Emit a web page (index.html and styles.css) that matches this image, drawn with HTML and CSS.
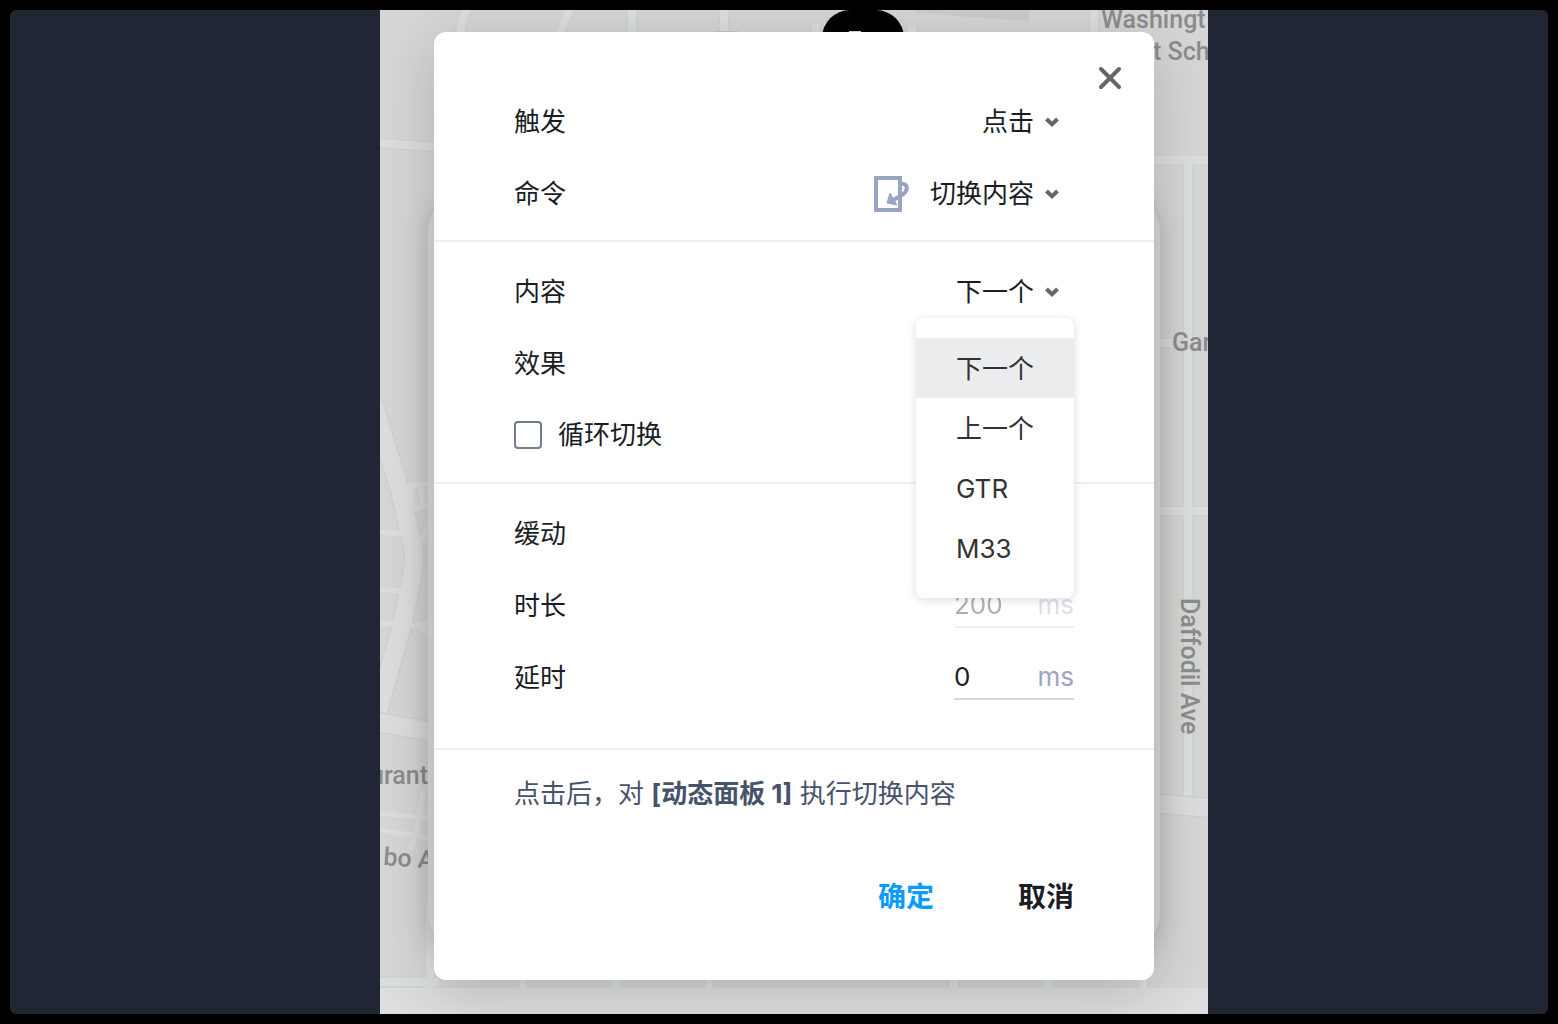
FILE: index.html
```html
<!DOCTYPE html>
<html lang="zh-CN">
<head>
    <meta charset="UTF-8">
    <title>切换内容</title>
    <link rel="stylesheet" href="styles.css">
</head>
<body>
    <div class="stage">
        <main class="canvas">
            <svg class="map" viewBox="380 10 828 1004" preserveAspectRatio="xMidYMin slice" aria-hidden="true">
                <rect x="380" y="10" width="828" height="1004" fill="#d6d6d5"/>
                <path d="M915 10h114v11l-60-4-54-5z" fill="#cbcccc"/>

                <!-- roads -->
                <g fill="none" stroke="#d0d3d3" stroke-width="11">
                    <path d="M468 8q-8 12-8 30M570 8l-12 30M632 8v30M724 8v30M816 24v14M912 26v12M1094 8v30"/>
                    <path d="M378 143l62 4M1150 160h60M1188 160v640M1160 343h16M1150 511h60"/>
                    <path d="M430 900v90M523 970v20M616 970v20M709 970v20M954 970v20M1048 970v20M1143 970v20M378 982h60"/>
                </g>
                <g fill="none" stroke="#dbdfe0" stroke-width="8">
                    <path d="M468 8q-8 12-8 30M570 8l-12 30M632 8v30M724 8v30M816 24v14M912 26v12M1094 8v30"/>
                    <path d="M378 143l62 4M1150 160h60M1188 160v640M1160 343h16M1150 511h60"/>
                    <path d="M430 900v90M523 970v20M616 970v20M709 970v20M954 970v20M1048 970v20M1143 970v20M378 982h60"/>
                </g>
                <g fill="none" stroke="#cdd1d1" stroke-width="21">
                    <path d="M372 400l28 90 14 62v14l-12 60-24 84M370 721l70 12M1150 803l60 5"/>
                </g>
                <g fill="none" stroke="#dbdddf" stroke-width="18">
                    <path d="M372 400l28 90 14 62v14l-12 60-24 84M370 721l70 12M1150 803l60 5"/>
                </g>
                <g fill="none" stroke="#dbdddf" stroke-width="5">
                    <path d="M378 532l24 2M378 589l24 2M378 623l22 2M403 486l35-2M408 511l30-9M410 486l2 22M421 486l2 20M412 556l26-46M400 625l20 1 18 14M418 626l20-8"/>
                    <path d="M378 813l60 6M378 830l60 9M423 790l-4 30-8 30"/>
                </g>

                <rect x="380" y="988" width="828" height="26" fill="#dcdee0"/>

                <g class="map-label">
                    <text x="1101" y="28">Washingt</text>
                    <text x="1153" y="60">t Sch</text>
                    <text x="1172" y="351">Gar</text>
                    <text x="370" y="784">urant</text>
                    <text x="383" y="865" transform="rotate(4 383 865)">bo Ave</text>
                    <text transform="translate(1181 598) rotate(90)">Daffodil Ave</text>
                </g>

                <!-- phone card under the dialog -->
                <rect class="map-card" x="428" y="192" width="732" height="760" rx="40"/>

                <rect x="822" y="10" width="82" height="60" rx="28" fill="#000"/>
                <path d="M849 31.5h12" stroke="#ddd"/>
                <path d="M714 31.5h24" stroke="#c4c4c4"/>
            </svg>

            <form class="dialog" role="dialog" aria-label="切换内容">
                <button type="button" class="close" aria-label="关闭">
                    <svg width="24" height="24" viewBox="0 0 24 24"><path d="M3 3l18 18M21 3L3 21" fill="none" stroke="#666" stroke-width="4" stroke-linecap="round"/></svg>
                </button>

                <section class="group group-first">
                    <div class="row">
                        <label for="trigger">触发</label>
                        <div class="picker">
                            <select id="trigger"><option>点击</option></select>
                            <svg class="chevron" viewBox="0 0 14 10"><path d="M1.5 2L7 7.2 12.5 2" fill="none" stroke="#666" stroke-width="4"/></svg>
                        </div>
                    </div>
                    <div class="row">
                        <label for="command">命令</label>
                        <div class="picker">
                            <svg class="command-icon" width="36" height="36" viewBox="0 0 36 36">
                                <path d="M2 2h24v32H2z" fill="none" stroke="#9aa5c1" stroke-width="4"/>
                                <path d="M27 8c5-1 7 3 5 7-2 4-7 6-13 9" fill="none" stroke="#9aa5c1" stroke-width="4"/>
                                <path d="M16 17l7 12-10-2z" fill="#9aa5c1" stroke="#9aa5c1" stroke-linejoin="round"/>
                            </svg>
                            <select id="command"><option>切换内容</option></select>
                            <svg class="chevron" viewBox="0 0 14 10"><path d="M1.5 2L7 7.2 12.5 2" fill="none" stroke="#666" stroke-width="4"/></svg>
                        </div>
                    </div>
                </section>

                <section class="group">
                    <div class="row">
                        <label for="content">内容</label>
                        <div class="picker">
                            <select id="content"><option>下一个</option></select>
                            <svg class="chevron" viewBox="0 0 14 10"><path d="M1.5 2L7 7.2 12.5 2" fill="none" stroke="#666" stroke-width="4"/></svg>
                            <div class="menu">
                                <button type="button" class="menu-item active">下一个</button>
                                <button type="button" class="menu-item">上一个</button>
                                <button type="button" class="menu-item">GTR</button>
                                <button type="button" class="menu-item">M33</button>
                            </div>
                        </div>
                    </div>
                    <div class="row">
                        <span>效果</span>
                    </div>
                    <div class="row row-check">
                        <label class="check"><input type="checkbox">循环切换</label>
                    </div>
                </section>

                <section class="group group-last">
                    <div class="row">
                        <span>缓动</span>
                    </div>
                    <div class="row">
                        <label for="duration">时长</label>
                        <div class="field disabled">
                            <input type="text" id="duration" value="200" disabled>
                            <span class="unit">ms</span>
                        </div>
                    </div>
                    <div class="row">
                        <label for="delay">延时</label>
                        <div class="field">
                            <input type="text" id="delay" value="0">
                            <span class="unit">ms</span>
                        </div>
                    </div>
                </section>

                <footer class="footer">
                    <p class="summary">点击后，对 <strong>[动态面板 1]</strong> 执行切换内容</p>
                    <div class="actions">
                        <button type="submit" class="action primary">确定</button>
                        <button type="button" class="action">取消</button>
                    </div>
                </footer>
            </form>
        </main>
    </div>
</body>
</html>
```
FILE: styles.css
```css
* {
    box-sizing: border-box;
}
body {
    margin: 0;
    padding: 10px;
    background: #000;
    color: #1a1d25;
    font-family: Inter, "Noto Sans CJK SC", sans-serif;
    font-size: 26px;
    line-height: 40px;
}
button, input, select {
    font: inherit;
    color: inherit;
    margin: 0;
    padding: 0;
    border: none;
    background: none;
}
button {
    cursor: pointer;
}
.stage {
    display: grid;
    grid-template-columns: 37fr minmax(auto, 828px) 34fr;
    min-height: calc(100vh - 20px);
    border-radius: 6px;
    background: #202634;
    overflow: hidden;
}
.canvas {
    grid-column: 2;
    position: relative;
    padding: 22px 54px 34px;
    overflow: hidden;
}
.map {
    position: absolute;
    inset: 0;
    width: 100%;
    height: 100%;
}
.map-label {
    font-family: Roboto, sans-serif;
    font-size: 25px;
    font-weight: 500;
    fill: #8c8c8c;
    stroke: #d6d8d8;
    stroke-width: 2px;
    paint-order: stroke;
}
.map-card {
    fill: #d6d6d8;
    filter: drop-shadow(0 4px 12px rgba(0,0,0,0.16));
}
.dialog {
    position: relative;
    border-radius: 12px;
    background: #fff;
    box-shadow: 0 12px 60px rgba(0,0,0,0.18);
}
.close {
    position: absolute;
    top: 34px;
    right: 32px;
    width: 24px;
    height: 24px;
}
.close svg {
    display: block;
}
.group {
    padding: 13px 80px 11px;
    border-bottom: 2px solid #eeeff3;
}
.group-first {
    padding-top: 53px;
}
.group-last {
    padding-bottom: 35px;
}
.row {
    display: flex;
    align-items: center;
    justify-content: space-between;
    height: 72px;
    padding-top: 2px;
}
.row-check {
    padding-top: 0;
}
.picker {
    position: relative;
    display: flex;
    align-items: center;
    padding-right: 15px;
}
.picker select {
    appearance: none;
    height: 40px;
    padding-right: 24px;
    cursor: pointer;
}
.chevron {
    width: 14px;
    height: 10px;
    margin-left: -14px;
    pointer-events: none;
}
.command-icon {
    margin-right: 20px;
}
.menu {
    position: absolute;
    top: 46px;
    right: 0;
    z-index: 1;
    padding: 20px 0;
    border-radius: 8px;
    background: #fff;
    box-shadow: 0 2px 10px rgba(0,0,0,0.14);
}
.menu-item {
    display: block;
    width: 100%;
    height: 60px;
    padding: 2px 40px 0;
    color: #333;
    text-align: left;
    white-space: nowrap;
}
.menu-item.active {
    background: #ebecee;
}
.check {
    display: flex;
    align-items: center;
    gap: 16px;
}
.check input {
    appearance: none;
    width: 28px;
    height: 28px;
    border: 2px solid #717a94;
    border-radius: 4px;
}
.field {
    display: flex;
    align-items: center;
    width: 120px;
    height: 44px;
    border-bottom: 2px solid #d8d8d8;
}
.field input {
    flex: 1;
    min-width: 0;
    height: 40px;
}
.field.disabled {
    opacity: 0.35;
}
.unit {
    color: #9aa5c1;
}
.footer {
    padding: 24px 80px 63px;
}
.summary {
    margin: 0 0 63px;
    color: #47526b;
}
.actions {
    display: flex;
    justify-content: flex-end;
    gap: 84px;
}
.action {
    font-size: 28px;
    font-weight: bold;
}
.action.primary {
    color: #0a9bff;
}
```
